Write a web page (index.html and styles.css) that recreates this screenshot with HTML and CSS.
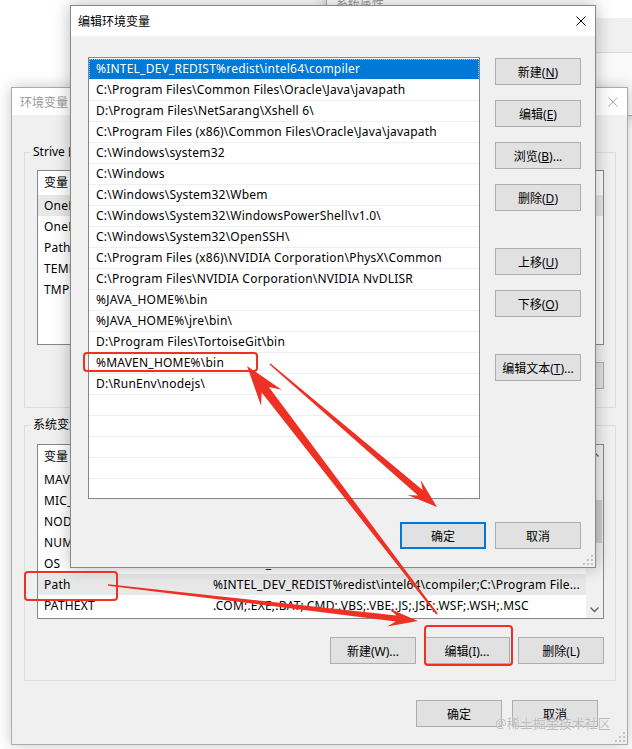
FILE: index.html
```html
<!DOCTYPE html>
<html lang="zh-CN">
<head>
    <meta charset="UTF-8">
    <meta name="viewport" content="width=device-width, initial-scale=1.0">
    <title>编辑环境变量</title>
    <link rel="stylesheet" href="styles.css">
</head>
<body>
<div class="desktop">

    <!-- 系统属性: the window everything else was opened from -->
    <div class="window sysprops inactive">
        <div class="titlebar"><span class="title">系统属性</span></div>
        <div class="tabstrip"></div>
        <div class="tabpage"></div>
    </div>

    <!-- 环境变量 (inactive, so no mnemonic underlines) -->
    <div class="window envvars inactive">
        <div class="titlebar">
            <span class="title">环境变量</span>
            <svg class="close" width="10" height="10" viewBox="0 0 10 10"><path d="M0.5 0.5 9.5 9.5M9.5 0.5 0.5 9.5" stroke="currentColor" stroke-width="1"/></svg>
        </div>
        <div class="dlg-body">
            <div class="group">
                <div class="group-title">Strive 的用户变量(U)</div>
                <div class="listview">
                    <div class="lv-main">
                        <div class="lv-head"><span>变量</span><span></span></div>
                        <div class="lv-row selected"><span>OneDrive</span><span></span></div>
                        <div class="lv-row"><span>OneDriveConsumer</span><span></span></div>
                        <div class="lv-row"><span>Path</span><span></span></div>
                        <div class="lv-row"><span>TEMP</span><span></span></div>
                        <div class="lv-row"><span>TMP</span><span></span></div>
                    </div>
                </div>
                <div class="btn-row">
                    <button class="btn">新建(N)...</button>
                    <button class="btn">编辑(E)...</button>
                    <button class="btn">删除(D)</button>
                </div>
            </div>

            <div class="group system">
                <div class="group-title">系统变量(S)</div>
                <div class="listview">
                    <div class="lv-main">
                        <div class="lv-head"><span>变量</span><span></span></div>
                        <div class="lv-row"><span>MAVEN_HOME</span><span></span></div>
                        <div class="lv-row"><span>MIC_LD_LIBRARY_PATH</span><span></span></div>
                        <div class="lv-row"><span>NODE_PATH</span><span></span></div>
                        <div class="lv-row"><span>NUMBER_OF_PROCESSORS</span><span></span></div>
                        <div class="lv-row"><span>OS</span><span>Windows_NT</span></div>
                        <div class="lv-row selected"><span>Path</span><span>%INTEL_DEV_REDIST%redist\intel64\compiler;C:\Program File...</span></div>
                        <div class="lv-row"><span>PATHEXT</span><span>.COM;.EXE;.BAT;.CMD;.VBS;.VBE;.JS;.JSE;.WSF;.WSH;.MSC</span></div>
                    </div>
                    <div class="vscroll">
                        <div class="sb-arrow"><svg width="9" height="6" viewBox="0 0 9 6"><path d="M0.5 5.5 4.5 1.5 8.5 5.5" fill="none" stroke="#606060" stroke-width="1.3"/></svg></div>
                        <div class="sb-track"><div class="sb-thumb"></div></div>
                        <div class="sb-arrow"><svg width="9" height="6" viewBox="0 0 9 6"><path d="M0.5 0.5 4.5 4.5 8.5 0.5" fill="none" stroke="#606060" stroke-width="1.3"/></svg></div>
                    </div>
                </div>
                <div class="btn-row">
                    <button class="btn">新建(W)...</button>
                    <button class="btn">编辑(I)...</button>
                    <button class="btn">删除(L)</button>
                </div>
            </div>

            <div class="btn-row footer">
                <button class="btn">确定</button>
                <button class="btn">取消</button>
            </div>
        </div>
        <svg class="grip" width="12" height="12" viewBox="0 0 12 12"><g fill="#c4c4c4"><rect x="9" y="1" width="2" height="2"/><rect x="9" y="5" width="2" height="2"/><rect x="5" y="5" width="2" height="2"/><rect x="9" y="9" width="2" height="2"/><rect x="5" y="9" width="2" height="2"/><rect x="1" y="9" width="2" height="2"/></g></svg>
    </div>

    <!-- 编辑环境变量 -->
    <div class="window editvar">
        <div class="titlebar">
            <span class="title">编辑环境变量</span>
            <svg class="close" width="10" height="10" viewBox="0 0 10 10"><path d="M0.5 0.5 9.5 9.5M9.5 0.5 0.5 9.5" stroke="currentColor" stroke-width="1"/></svg>
        </div>
        <div class="edit-body">
            <div class="pathlist">
                <div class="path-item selected">%INTEL_DEV_REDIST%redist\intel64\compiler</div>
                <div class="path-item">C:\Program Files\Common Files\Oracle\Java\javapath</div>
                <div class="path-item">D:\Program Files\NetSarang\Xshell 6\</div>
                <div class="path-item">C:\Program Files (x86)\Common Files\Oracle\Java\javapath</div>
                <div class="path-item">C:\Windows\system32</div>
                <div class="path-item">C:\Windows</div>
                <div class="path-item">C:\Windows\System32\Wbem</div>
                <div class="path-item">C:\Windows\System32\WindowsPowerShell\v1.0\</div>
                <div class="path-item">C:\Windows\System32\OpenSSH\</div>
                <div class="path-item">C:\Program Files (x86)\NVIDIA Corporation\PhysX\Common</div>
                <div class="path-item">C:\Program Files\NVIDIA Corporation\NVIDIA NvDLISR</div>
                <div class="path-item">%JAVA_HOME%\bin</div>
                <div class="path-item">%JAVA_HOME%\jre\bin\</div>
                <div class="path-item">D:\Program Files\TortoiseGit\bin</div>
                <div class="path-item">%MAVEN_HOME%\bin</div>
                <div class="path-item">D:\RunEnv\nodejs\</div>
                <div class="path-item"></div>
                <div class="path-item"></div>
                <div class="path-item"></div>
                <div class="path-item"></div>
                <div class="path-item"></div>
            </div>
            <div class="side-btns">
                <button class="btn">新建(<u>N</u>)</button>
                <button class="btn">编辑(<u>E</u>)</button>
                <button class="btn">浏览(<u>B</u>)...</button>
                <button class="btn">删除(<u>D</u>)</button>
                <button class="btn gap">上移(<u>U</u>)</button>
                <button class="btn">下移(<u>O</u>)</button>
                <button class="btn gap">编辑文本(<u>T</u>)...</button>
            </div>
            <div class="btn-row edit-footer">
                <button class="btn default">确定</button>
                <button class="btn">取消</button>
            </div>
        </div>
        <svg class="grip" width="12" height="12" viewBox="0 0 12 12"><g fill="#c4c4c4"><rect x="9" y="1" width="2" height="2"/><rect x="9" y="5" width="2" height="2"/><rect x="5" y="5" width="2" height="2"/><rect x="9" y="9" width="2" height="2"/><rect x="5" y="9" width="2" height="2"/><rect x="1" y="9" width="2" height="2"/></g></svg>
    </div>

    <!-- red boxes and arrows drawn on top -->
    <svg class="marks" width="632" height="749" viewBox="0 0 632 749">
        <g fill="none" stroke="#ee3124" stroke-width="2">
            <rect x="84" y="353" width="173" height="18" rx="3"/>
            <rect x="25" y="572" width="92" height="28" rx="3"/>
            <rect x="425" y="626" width="87" height="39" rx="3"/>
        </g>
        <g fill="#ee3124">
            <polygon points="107.9,585.8 395.8,621.4 387.2,626.5 418,621 389.2,608.6 396.5,615.5 108.1,584.2"/>
            <polygon points="437.8,613.4 268.8,387.1 281.7,389.8 247,366 261.0,405.7 261.7,392.5 436.2,614.6"/>
            <polygon points="269.5,364.6 418.0,495.4 407.7,495.1 437,507 420.7,479.9 422.6,490.0 270.5,363.4"/>
        </g>
    </svg>

    <div class="watermark">@稀土掘金技术社区</div>
</div>
</body>
</html>
```

FILE: styles.css
```css
* {
    box-sizing: border-box;
}
html, body {
    margin: 0;
}
body {
    width: 632px;
    height: 749px;
    overflow: hidden;
    background: #fff;
    font-family: "Noto Sans", "Noto Sans CJK SC", sans-serif;
    font-size: 12px;
    color: #000;
}
.desktop {
    position: relative;
    width: 632px;
    height: 749px;
}

/* window chrome */
.window {
    position: absolute;
    display: flex;
    flex-direction: column;
    background: #f0f0f0;
    border: 1px solid #888;
    box-shadow: 0 0 14px rgba(0,0,0,0.22);
}
.window.inactive {
    border-color: #aaa;
}
.titlebar {
    display: flex;
    align-items: center;
    flex: none;
    background: #fff;
}
.title {
    flex: 1;
    white-space: nowrap;
}
.inactive .title {
    color: #999;
}
.close {
    flex: none;
    color: #000;
}
.inactive .close {
    color: #aaa;
}
.grip {
    position: absolute;
    right: 1px;
    bottom: 1px;
}

/* buttons */
.btn {
    width: 86px;
    height: 27px;
    padding: 0;
    background: #e1e1e1;
    border: 1px solid #adadad;
    font-family: inherit;
    font-size: 12px;
    color: #000;
    white-space: nowrap;
}
.btn.default {
    border-color: #0078d7;
    box-shadow: inset 0 0 0 1px #0078d7;
}
.btn-row {
    display: flex;
    justify-content: flex-end;
    gap: 8px;
}

/* 系统属性 */
.sysprops {
    left: 326px;
    top: -14px;
    width: 340px;
    height: 130px;
}
.sysprops .titlebar {
    height: 31px;
    padding-left: 9px;
}
.sysprops .tabstrip {
    height: 34px;
    flex: none;
}
.sysprops .tabpage {
    flex: 1;
    background: #fafafa;
    border-top: 1px solid #dadada;
}

/* 环境变量 */
.envvars {
    left: 11px;
    top: 87px;
    width: 617px;
    height: 658px;
}
.envvars .titlebar {
    height: 27px;
    padding-left: 8px;
}
.envvars .close {
    margin-right: 9px;
}
.dlg-body {
    flex: 1;
    display: flex;
    flex-direction: column;
    padding: 37px 11px 0 12px;
}
.group {
    border: 1px solid #dcdcdc;
    padding: 0 11px 18px 12px;
}
.group.system {
    margin-top: 17px;
    padding-bottom: 16px;
}
.group-title {
    width: max-content;
    margin: -9px 0 0 -7px;
    padding: 0 3px;
    line-height: 16px;
    background: #f0f0f0;
}
.listview {
    display: flex;
    height: 175px;
    margin-top: 10px;
    background: #fff;
    border: 1px solid #828790;
    overflow: hidden;
}
.system .listview {
    margin-top: 11px;
}
.lv-main {
    flex: 1;
    min-width: 0;
}
.lv-head,
.lv-row {
    display: grid;
    grid-template-columns: 169px 1fr;
    white-space: nowrap;
}
.lv-head {
    height: 24px;
    line-height: 24px;
}
.lv-row {
    height: 21px;
    line-height: 21px;
    letter-spacing: 0.2px;
}
.lv-head span,
.lv-row span {
    padding-left: 6px;
    overflow: hidden;
}
.lv-row.selected {
    background: #e8e8e8;
}
.group .btn-row {
    margin-top: 17px;
}
.system .btn-row {
    margin-top: 18px;
}
.footer {
    margin-top: 19px;
    margin-right: 18px;
    gap: 10px;
}

.vscroll {
    width: 17px;
    flex: none;
    display: flex;
    flex-direction: column;
    background: #f0f0f0;
}
.sb-arrow {
    height: 17px;
    display: flex;
    align-items: center;
    justify-content: center;
    flex: none;
}
.sb-track {
    flex: 1;
}
.sb-thumb {
    height: 43px;
    margin: 38px 1px 0 2px;
    background: #cdcdcd;
}

/* 编辑环境变量 */
.editvar {
    left: 70px;
    top: 5px;
    width: 526px;
    height: 563px;
    box-shadow: 0 0 16px rgba(0,0,0,0.28);
}
.editvar .titlebar {
    height: 30px;
    padding-left: 7px;
}
.editvar .close {
    margin-right: 9px;
}
.edit-body {
    flex: 1;
    display: grid;
    grid-template-columns: 392px 86px;
    grid-template-rows: 442px auto;
    column-gap: 15px;
    padding: 21px 13px 0 17px;
}
.pathlist {
    background: #fff;
    border: 1px solid #828790;
    padding-top: 1px;
    overflow: hidden;
}
.path-item {
    height: 21px;
    line-height: 20px;
    padding-left: 7px;
    border-bottom: 1px solid #efefef;
    white-space: nowrap;
    letter-spacing: 0.22px;
}
.path-item.selected {
    background: #0078d7;
    color: #fff;
    outline: 1px dotted rgba(255,255,255,0.55);
    outline-offset: -1px;
}
.side-btns {
    display: flex;
    flex-direction: column;
    gap: 15px;
    padding-top: 1px;
}
.side-btns .gap {
    margin-top: 22px;
}
.edit-footer {
    grid-column: 1 / 3;
    margin-top: 23px;
    gap: 9px;
}

/* annotation overlay */
.marks {
    position: absolute;
    left: 0;
    top: 0;
    pointer-events: none;
}
.watermark {
    position: absolute;
    left: 495px;
    top: 713px;
    font-size: 13px;
    color: rgba(175,175,175,0.85);
    text-shadow: 0 0 1px rgba(255,255,255,0.9);
    pointer-events: none;
}
```
